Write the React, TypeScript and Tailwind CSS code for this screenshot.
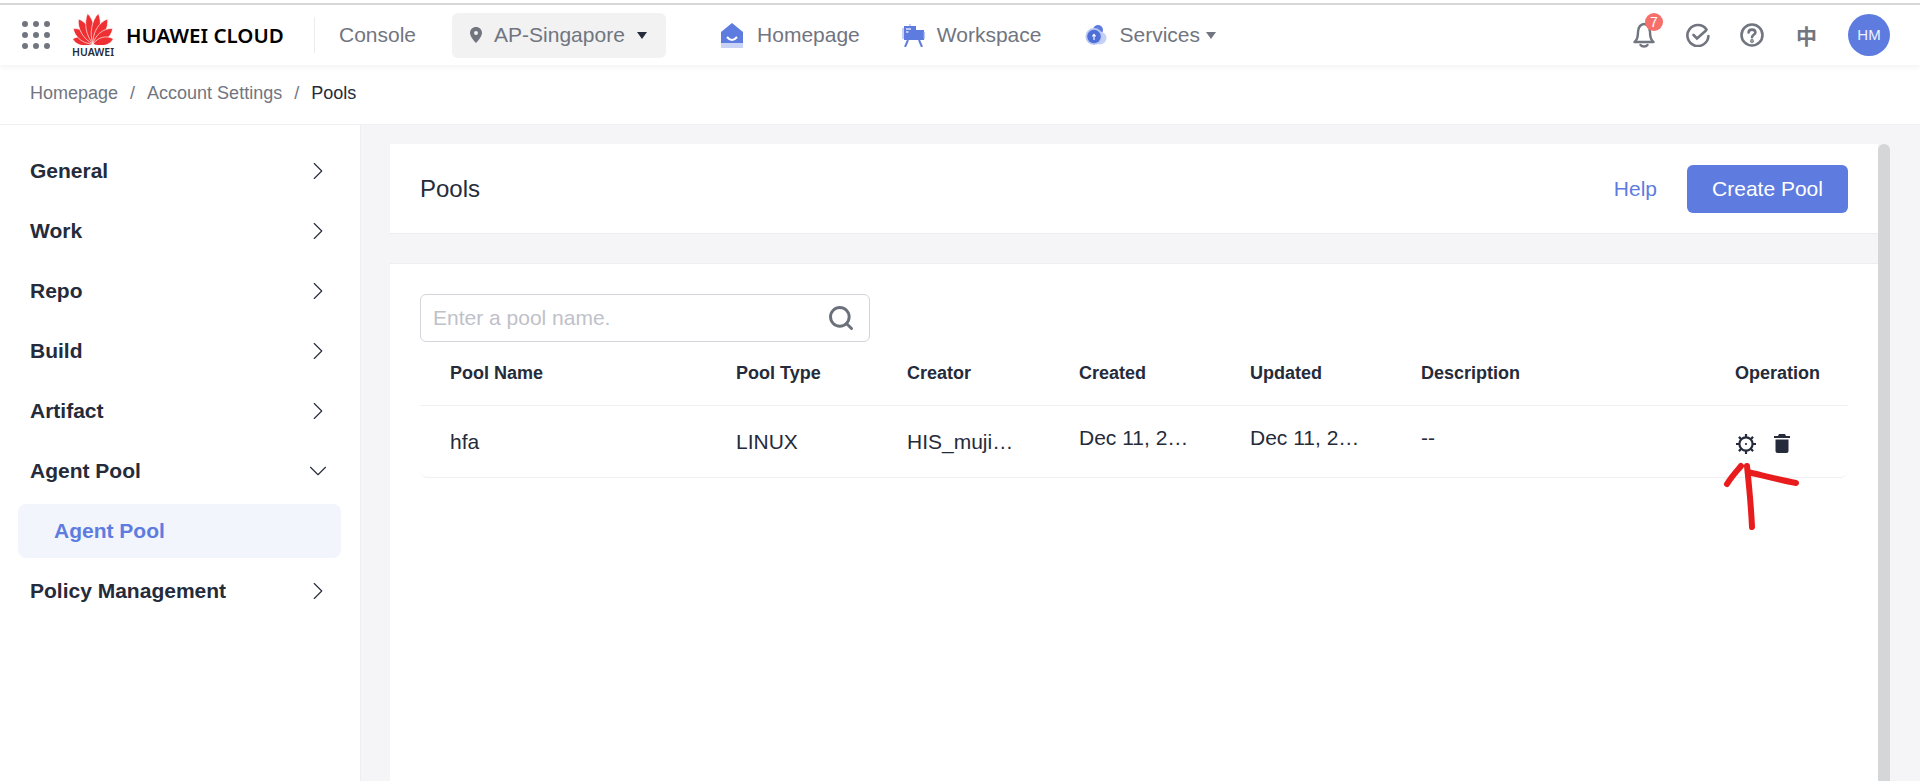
import { ChevronDown, ChevronRight, Search } from 'lucide-react';

const font = 'font-["Liberation_Sans",Arial,sans-serif]';

const menu = ['General', 'Work', 'Repo', 'Build', 'Artifact'];
const columns = ['Pool Name', 'Pool Type', 'Creator', 'Created', 'Updated', 'Description', 'Operation'];
const gridCols = 'grid grid-cols-[286px_171px_172px_171px_171px_314px_143px]';

function Logo() {
  const petals = [
    { a: -76, l: 21, w: 5.5 },
    { a: -52, l: 25, w: 6 },
    { a: -30, l: 29, w: 6 },
    { a: -10, l: 31, w: 5.5 },
    { a: 10, l: 31, w: 5.5 },
    { a: 30, l: 29, w: 6 },
    { a: 52, l: 25, w: 6 },
    { a: 76, l: 21, w: 5.5 },
  ];
  return (
    <svg width="42" height="32" viewBox="0 0 42 32" className="block">
      <defs>
        <linearGradient id="hw" gradientUnits="userSpaceOnUse" x1="21" y1="31" x2="21" y2="0">
          <stop offset="0" stopColor="#b30c1b" />
          <stop offset="1" stopColor="#ef2f31" />
        </linearGradient>
      </defs>
      {petals.map((p, i) => (
        <path
          key={i}
          transform={`translate(21 31) rotate(${p.a})`}
          d={`M0 0 C${-p.w} ${-p.l * 0.3} ${-p.w} ${-p.l * 0.75} 0 ${-p.l} C${p.w} ${-p.l * 0.75} ${p.w} ${-p.l * 0.3} 0 0Z`}
          fill="url(#hw)"
          stroke="#fff"
          strokeWidth="0.6"
        />
      ))}
    </svg>
  );
}

function Dots() {
  return (
    <div className="grid grid-cols-3 gap-x-[5px] gap-y-[5px] w-[28px]">
      {Array.from({ length: 9 }).map((_, i) => (
        <span key={i} className="w-[6px] h-[6px] rounded-full bg-[#71757f]" />
      ))}
    </div>
  );
}

function Pin() {
  return (
    <svg width="12" height="16" viewBox="0 0 12 16">
      <path d="M6 0 C2.6 0 0 2.6 0 6 C0 10 6 16 6 16 C6 16 12 10 12 6 C12 2.6 9.4 0 6 0Z M6 4 A2 2 0 1 1 6 8 A2 2 0 1 1 6 4Z" fill="#71757f" fillRule="evenodd" />
    </svg>
  );
}

function HomeIcon() {
  return (
    <svg width="22" height="25" viewBox="0 0 22 25">
      <path d="M11 0 L22 9 V24 H0 V9Z" fill="#5e7ce0" />
      <path d="M0 20 H22 V25 H0Z" fill="#c8d3f6" />
      <path d="M6 14 Q11 20 16 14" stroke="#fff" strokeWidth="2" fill="none" />
    </svg>
  );
}

function WorkIcon() {
  return (
    <svg width="23" height="23" viewBox="0 0 23 23">
      <path d="M2 2 H14 V6 H22 V16 H2Z" fill="#5e7ce0" />
      <path d="M1 4 V15 M22.5 8 V15 M8 0 V2" stroke="#b9c7f3" strokeWidth="1.6" />
      <path d="M4 5 H9 M4 8 H6.5" stroke="#dfe5fa" strokeWidth="1.6" />
      <path d="M6 16 L3 23 M17 16 L20 23" stroke="#5e7ce0" strokeWidth="2" />
    </svg>
  );
}

function ServiceIcon() {
  return (
    <svg width="23" height="20" viewBox="0 0 23 20">
      <circle cx="14" cy="5" r="5" fill="#5e7ce0" />
      <circle cx="16" cy="13" r="6.5" fill="#c6d1f6" />
      <circle cx="10" cy="11.5" r="8.5" fill="#b9c7f3" />
      <circle cx="10" cy="11.5" r="6.8" fill="#4f6fd8" />
      <path d="M10 15 V10 M8.4 11.4 L10 9.4 L11.6 11.4" stroke="#fff" strokeWidth="1.1" fill="none" />
    </svg>
  );
}

function Bell() {
  return (
    <svg width="22" height="26" viewBox="0 0 22 26" fill="none" stroke="#71757f" strokeWidth="2.4" strokeLinejoin="round" className="block">
      <path d="M1.5 20 C4 18 5 15 5 10 C5 5 8 2 11 2 C14 2 17 5 17 10 C17 15 18 18 20.5 20Z" />
      <path d="M7.5 23 C9 25 13 25 14.5 23" strokeLinecap="round" />
    </svg>
  );
}

function TaskCheck() {
  return (
    <svg width="24" height="24" viewBox="0 0 24 24" fill="none" stroke="#71757f" strokeWidth="2.6" strokeLinecap="round" className="block">
      <path d="M20.5 6.5 A10.5 10.5 0 1 0 22.4 13" />
      <path d="M7.5 12 L11 15.5 L20 7.5" />
    </svg>
  );
}

function HelpIcon() {
  return (
    <svg width="24" height="24" viewBox="0 0 24 24" fill="none" stroke="#71757f" strokeWidth="2.6" strokeLinecap="round" className="block">
      <circle cx="12" cy="12" r="10.5" />
      <path d="M8.6 9.5 C8.6 5.6 15.4 5.6 15.4 9.5 C15.4 11.8 12 11.8 12 14.2" />
      <circle cx="12" cy="18" r="0.6" fill="#71757f" />
    </svg>
  );
}

function Gear() {
  return (
    <svg width="22" height="22" viewBox="0 0 22 22" fill="none" stroke="#252b3a" className="block">
      <circle cx="11" cy="11" r="6.6" strokeWidth="2.2" />
      <circle cx="11" cy="11" r="1.1" fill="#252b3a" strokeWidth="0" />
      <path d="M11 1 V4 M11 18 V21 M1 11 H4 M18 11 H21 M3.9 3.9 L6 6 M16 16 L18.1 18.1 M3.9 18.1 L6 16 M16 6 L18.1 3.9" strokeWidth="2.2" />
    </svg>
  );
}

function Trash() {
  return (
    <svg width="16" height="19" viewBox="0 0 16 19" fill="#252b3a" className="block">
      <path d="M5 0 H11 L12 2 H16 V4 H0 V2 H4Z" />
      <path d="M1.5 5.5 H14.5 V17 A2 2 0 0 1 12.5 19 H3.5 A2 2 0 0 1 1.5 17Z" />
    </svg>
  );
}

// hand drawn marker over the gear
function RedArrow() {
  return (
    <svg className="absolute left-[1715px] top-[455px]" width="90" height="80" viewBox="1715 455 90 80" fill="none" stroke="#e81c1c" strokeWidth="6" strokeLinecap="round" strokeLinejoin="round">
      <path d="M1752 527 C1751 505 1749 485 1747 466" />
      <path d="M1727 484 C1732 476 1736 472 1741 466" />
      <path d="M1748 472 C1765 476 1780 480 1796 483" />
    </svg>
  );
}

function MenuItem({ label }: { label: string }) {
  return (
    <div className="h-[60px] pl-[30px] pr-[27px] flex items-center justify-between text-[#252b3a] text-[21px] font-bold">
      <span>{label}</span>
      <ChevronRight size={30} strokeWidth={0.9} />
    </div>
  );
}

export default function App() {
  return (
    <div className={`${font} relative w-[1920px] h-[781px] overflow-hidden bg-white flex flex-col`}>
      <div className="h-[3px] bg-white" />
      <div className="h-[2px] bg-[#d9d9d9]" />

      <header className="h-[60px] flex items-center bg-white shadow-[0_2px_6px_rgba(0,0,0,0.06)] relative z-10 text-[#71757f] text-[21px]">
        <div className="ml-[22px]"><Dots /></div>
        <div className="ml-[22px] w-[42px] flex flex-col items-center">
          <Logo />
          <span className='text-[10.5px] leading-[10px] font-semibold text-[#252b3a] mt-[2px] font-["Noto_Sans",sans-serif]'>HUAWEI</span>
        </div>
        <span className='ml-[12px] w-[159px] text-[20.5px] font-semibold text-black whitespace-nowrap font-["Noto_Sans",sans-serif]'>HUAWEI CLOUD</span>
        <div className="ml-[29px] w-px h-[36px] bg-[#ececee]" />
        <span className="ml-[24px]">Console</span>
        <div className="ml-[36px] w-[214px] h-[45px] rounded-[6px] bg-[#f2f2f3] flex items-center pl-[18px]">
          <Pin />
          <span className="ml-[12px]">AP-Singapore</span>
          <span className="ml-[12px] w-0 h-0 border-x-[5.5px] border-x-transparent border-t-[7px] border-t-[#252b3a]" />
        </div>
        <div className="ml-[55px] flex items-center gap-[14px]"><HomeIcon /><span>Homepage</span></div>
        <div className="ml-[42px] flex items-center gap-[12px]"><WorkIcon /><span>Workspace</span></div>
        <div className="ml-[43px] flex items-center gap-[12px]">
          <ServiceIcon />
          <span>Services</span>
          <span className="-ml-[6px] w-0 h-0 border-x-[5.5px] border-x-transparent border-t-[7px] border-t-[#71757f]" />
        </div>
        <div className="ml-auto flex items-center mr-[30px]">
          <div className="relative mr-[31px]">
            <Bell />
            <span className="absolute -top-[9px] left-[12px] w-[18px] h-[18px] rounded-full bg-[#f66f6a] text-white text-[14px] flex items-center justify-center">7</span>
          </div>
          <div className="mr-[30px]"><TaskCheck /></div>
          <div className="mr-[32px]"><HelpIcon /></div>
          <span className='mr-[31px] w-[21px] text-[21px] font-["Noto_Sans_CJK_SC",sans-serif] font-bold leading-none'>中</span>
          <div className="w-[42px] h-[42px] rounded-full bg-[#5e7ce0] text-[#eef1fc] text-[15px] flex items-center justify-center">HM</div>
        </div>
      </header>

      <nav className="h-[60px] shrink-0 pl-[30px] pb-[2px] flex items-center gap-[12px] text-[18px] text-[#71757f] border-b border-[#f0f0f2]">
        <span>Homepage</span>
        <span>/</span>
        <span>Account Settings</span>
        <span>/</span>
        <span className="text-[#252b3a]">Pools</span>
      </nav>

      <div className="flex flex-1 min-h-0">
        <aside className="w-[361px] shrink-0 border-r border-[#eeeef0] pt-[16px]">
          {menu.map((m) => <MenuItem key={m} label={m} />)}
          <div className="h-[60px] pl-[30px] pr-[27px] flex items-center justify-between text-[#252b3a] text-[21px] font-bold">
            <span>Agent Pool</span>
            <ChevronDown size={30} strokeWidth={0.9} />
          </div>
          <div className="mt-[3px] ml-[18px] w-[323px] h-[54px] rounded-[8px] bg-[#f2f5fc] flex items-center pl-[36px] text-[21px] font-bold text-[#5e7ce0]">
            Agent Pool
          </div>
          <div className="mt-[3px]"><MenuItem label="Policy Management" /></div>
        </aside>

        <main className="flex-1 flex bg-[#f5f5f7] pl-[29px] pr-[30px] pt-[19px]">
          <div className="flex-1 flex flex-col gap-[29px]">
            <div className="h-[90px] shrink-0 bg-white border-b border-[#eeeef0] px-[30px] flex items-center justify-between">
              <span className="text-[24px] text-[#252b3a]">Pools</span>
              <div className="flex items-center gap-[30px]">
                <span className="text-[21px] text-[#5e7ce0]">Help</span>
                <button className="w-[161px] h-[48px] rounded-[6px] bg-[#5e7ce0] text-white text-[21px]">Create Pool</button>
              </div>
            </div>

            <div className="flex-1 bg-white border-t border-[#eeeef0] px-[30px] pt-[30px]">
              <div className="w-[450px] h-[48px] rounded-[6px] border border-[#d4d5da] flex items-center justify-between pl-[12px] pr-[14px]">
                <span className="text-[21px] text-[#bfc1c9]">Enter a pool name.</span>
                <Search size={28} stroke="#6b707a" strokeWidth={2.5} />
              </div>
              <div className={`${gridCols} h-[64px] items-center border-b border-[#f0f0f2] text-[18px] font-bold text-[#252b3a]`}>
                {columns.map((c) => <div key={c} className="pl-[30px]">{c}</div>)}
              </div>
              <div className={`${gridCols} h-[72px] rounded-b-[8px] border-b border-[#f0f0f2] items-center text-[21px] text-[#252b3a]`}>
                <div className="pl-[30px]">hfa</div>
                <div className="pl-[30px]">LINUX</div>
                <div className="pl-[30px]">HIS_muji…</div>
                <div className="pl-[30px] -mt-[7px]">Dec 11, 2…</div>
                <div className="pl-[30px] -mt-[7px]">Dec 11, 2…</div>
                <div className="pl-[30px] -mt-[7px]">--</div>
                <div className="pl-[30px] flex items-center gap-[17px] mt-[4px]">
                  <Gear />
                  <Trash />
                </div>
              </div>
            </div>
          </div>
          <div className="w-[12px] shrink-0 rounded-t-[6px] bg-[#d5d6d8]" />
        </main>
      </div>

      <RedArrow />
    </div>
  );
}
